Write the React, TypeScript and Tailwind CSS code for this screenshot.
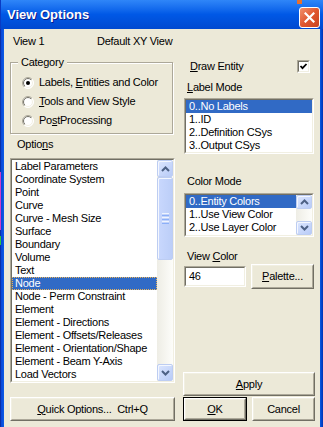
import React from "react";

function U({ children }: { children: React.ReactNode }) {
  return <span className="underline decoration-1 underline-offset-[1px]">{children}</span>;
}

function Sunken({ className = "", children }: { className?: string; children?: React.ReactNode }) {
  return (
    <div className={`border border-t-[#ACA899] border-l-[#ACA899] border-r-white border-b-white ${className}`}>
      <div className="h-full w-full border border-t-[#716F64] border-l-[#716F64] border-r-[#F1EFE2] border-b-[#F1EFE2] bg-white overflow-hidden">
        {children}
      </div>
    </div>
  );
}

function Btn({ className = "", children, def = false }: { className?: string; children: React.ReactNode; def?: boolean }) {
  const core = (
    <div className="h-full w-full border border-t-white border-l-white border-r-[#716F64] border-b-[#716F64]">
      <div className="h-full w-full border border-t-[#F1EFE2] border-l-[#F1EFE2] border-r-[#ACA899] border-b-[#ACA899] flex items-center justify-center bg-[#ECE9D8] leading-[13px]">
        {children}
      </div>
    </div>
  );
  return def ? <div className={`border border-black ${className}`}>{core}</div> : <div className={className}>{core}</div>;
}

function Radio({ checked = false }: { checked?: boolean }) {
  return (
    <svg width="12" height="12" viewBox="0 0 12 12" className="shrink-0">
      <defs>
        <linearGradient id="ro" x1="0" y1="0" x2="1" y2="1">
          <stop offset="0.5" stopColor="#ACA899" />
          <stop offset="0.5" stopColor="#FFFFFF" />
        </linearGradient>
        <linearGradient id="ri" x1="0" y1="0" x2="1" y2="1">
          <stop offset="0.5" stopColor="#716F64" />
          <stop offset="0.5" stopColor="#F1EFE2" />
        </linearGradient>
      </defs>
      <circle cx="6" cy="6" r="5.5" fill="#fff" stroke="url(#ro)" strokeWidth="1" />
      <circle cx="6" cy="6" r="4.5" fill="#fff" stroke="url(#ri)" strokeWidth="1" />
      {checked && <circle cx="6" cy="6" r="2" fill="#000" />}
    </svg>
  );
}

function Check() {
  return (
    <Sunken className="w-[13px] h-[13px]">
      <svg width="9" height="9" viewBox="0 0 9 9">
        <polyline points="1.5,4 3.5,6.2 7.5,2" fill="none" stroke="#000" strokeWidth="1.8" />
      </svg>
    </Sunken>
  );
}

function Chev({ up }: { up: boolean }) {
  return (
    <svg width="9" height="6" viewBox="0 0 9 6">
      <polyline points={up ? "1,5 4.5,1.5 8,5" : "1,1 4.5,4.5 8,1"} fill="none" stroke="#4D6185" strokeWidth="2" />
    </svg>
  );
}

function SBtn({ up, h }: { up: boolean; h: string }) {
  return (
    <div className={`${h} w-full flex items-center justify-center rounded-[2px] border border-[#BDCDF2] bg-gradient-to-br from-[#DCE6FE] to-[#B8CBF7] shadow-[inset_1px_1px_0_#F4F7FE]`}>
      <Chev up={up} />
    </div>
  );
}

function Thumb({ h }: { h: string }) {
  return (
    <div className={`${h} w-full flex flex-col items-center justify-center gap-[1px] rounded-[2px] border border-[#BDCDF2] bg-gradient-to-r from-[#C9D8FD] to-[#BCCEF8] shadow-[inset_1px_1px_0_#F4F7FE]`}>
      <div className="h-[1px] w-[7px] bg-[#EEF4FE]" />
      <div className="h-[1px] w-[7px] bg-[#8CB0F8]" />
      <div className="h-[1px] w-[7px] bg-[#EEF4FE]" />
      <div className="h-[1px] w-[7px] bg-[#8CB0F8]" />
      <div className="h-[1px] w-[7px] bg-[#EEF4FE]" />
      <div className="h-[1px] w-[7px] bg-[#8CB0F8]" />
    </div>
  );
}

function Row({ text, sel = false, focus = false }: { text: string; sel?: boolean; focus?: boolean }) {
  return (
    <div
      className={`h-[13px] leading-[13px] pl-[3px] whitespace-nowrap ${sel ? "bg-[#316AC5] text-white" : ""} ${
        focus ? "outline outline-1 outline-dotted outline-[#E8B35A] -outline-offset-1" : ""
      }`}
    >
      {text}
    </div>
  );
}

const options = [
  "Label Parameters",
  "Coordinate System",
  "Point",
  "Curve",
  "Curve - Mesh Size",
  "Surface",
  "Boundary",
  "Volume",
  "Text",
  "Node",
  "Node - Perm Constraint",
  "Element",
  "Element - Directions",
  "Element - Offsets/Releases",
  "Element - Orientation/Shape",
  "Element - Beam Y-Axis",
  "Load Vectors",
];

export default function App() {
  return (
    <div className="relative w-[323px] h-[427px] overflow-hidden flex flex-col font-['Liberation_Sans',Arial,sans-serif] text-[11px] text-black tracking-[-0.25px]">
      {/* Title bar */}
      <div className="h-[29px] shrink-0 flex items-center justify-between bg-gradient-to-b from-[#2F86F8] via-[#0058E6] to-[#0049D0] shadow-[inset_1px_0_0_#0A3BC4]">
        <div className="pl-[7px] pt-[1px] text-white font-bold text-[13px] tracking-normal [text-shadow:1px_1px_0_#0A1C8C]">
          View Options
        </div>
        <div className="mr-[3px] mt-[6px] w-[21px] h-[21px] rounded-[3px] border border-white bg-gradient-to-br from-[#F0906C] via-[#E0562E] to-[#C8431F] flex items-center justify-center">
          <svg width="11" height="11" viewBox="0 0 11 11">
            <path d="M1.5 1.5 L9.5 9.5 M9.5 1.5 L1.5 9.5" stroke="#fff" strokeWidth="2.2" strokeLinecap="square" />
          </svg>
        </div>
      </div>
      <div className="absolute left-[297px] top-0 w-[5px] h-[4px] bg-[#E8702E]" />

      <div className="flex flex-1">
        {/* left frame */}
        <div className="w-[4px] flex">
          <div className="w-[1px] flex flex-col">
            <div className="h-[143px] bg-[#0A2FA8]" />
            <div className="h-[58px] bg-[#D03CC8]" />
            <div className="h-[6px] bg-[#0A2FA8]" />
            <div className="h-[9px] bg-[#2FC83A]" />
            <div className="flex-1 bg-[#0A2FA8]" />
          </div>
          <div className="flex-1 bg-gradient-to-r from-[#0A45D6] to-[#0C5CE6]" />
        </div>

        {/* body */}
        <div className="flex-1 bg-[#ECE9D8] flex flex-col">
          <div className="mt-[6px] h-[13px] leading-[13px] flex pl-[9px]">
            <span className="w-[84px]">View 1</span>
            <span>Default XY View</span>
          </div>

          <div className="flex pl-[6px]">
            {/* left column */}
            <div className="w-[165px] flex flex-col">
              <div className="relative mt-[14px] mr-[2px] h-[72px] border border-[#ACA899] shadow-[inset_1px_1px_0_#fff,1px_1px_0_#fff]">
                <div className="absolute left-[7px] top-[-7px] px-[3px] h-[13px] leading-[13px] bg-[#ECE9D8]">Category</div>
                <div className="pt-[10px] pl-[11px] flex flex-col">
                  <div className="h-[19px] flex items-center gap-[5px]">
                    <Radio checked />
                    <span className="leading-[13px]">
                      Labels, <U>E</U>ntities and Color
                    </span>
                  </div>
                  <div className="h-[19px] flex items-center gap-[5px]">
                    <Radio />
                    <span className="leading-[13px]">
                      <U>T</U>ools and View Style
                    </span>
                  </div>
                  <div className="h-[19px] flex items-center gap-[5px]">
                    <Radio />
                    <span className="leading-[13px]">
                      Po<U>s</U>tProcessing
                    </span>
                  </div>
                </div>
              </div>

              <div className="mt-[4px] h-[13px] leading-[13px] pl-[7px]">
                Optio<U>n</U>s
              </div>

              <Sunken className="mt-[7px] h-[225px] w-[165px]">
                <div className="flex h-full">
                  <div className="flex-1 flex flex-col pt-[0px]">
                    {options.map((o) => (
                      <Row key={o} text={o} sel={o === "Node"} focus={o === "Node"} />
                    ))}
                  </div>
                  <div className="w-[16px] flex flex-col bg-gradient-to-r from-[#EEEDE5] to-[#FDFDFA]">
                    <SBtn up h="h-[17px]" />
                    <Thumb h="h-[83px]" />
                    <div className="flex-1" />
                    <SBtn up={false} h="h-[17px]" />
                  </div>
                </div>
              </Sunken>

              <Btn className="mt-[14px] h-[24px] w-[165px]">
                <span>
                  <U>Q</U>uick Options...&nbsp;&nbsp;Ctrl+Q
                </span>
              </Btn>
            </div>

            {/* right column */}
            <div className="ml-[8px] w-[132px] flex flex-col">
              <div className="mt-[12px] h-[13px] flex items-center justify-between pl-[7px] pr-[5px]">
                <span className="leading-[13px]">
                  <U>D</U>raw Entity
                </span>
                <Check />
              </div>

              <div className="mt-[8px] h-[13px] leading-[13px] pl-[4px]">
                <U>L</U>abel Mode
              </div>

              <Sunken className="mt-[4px] ml-[1px] w-[130px] h-[56px]">
                <Row text="0..No Labels" sel />
                <Row text="1..ID" />
                <Row text="2..Definition CSys" />
                <Row text="3..Output CSys" />
              </Sunken>

              <div className="mt-[21px] h-[13px] leading-[13px] pl-[4px]">Color Mode</div>

              <Sunken className="mt-[5px] ml-[1px] w-[130px] h-[44px]">
                <div className="flex h-full">
                  <div className="flex-1 flex flex-col">
                    <Row text="0..Entity Colors" sel />
                    <Row text="1..Use View Color" />
                    <Row text="2..Use Layer Color" />
                  </div>
                  <div className="w-[16px] flex flex-col bg-gradient-to-r from-[#EEEDE5] to-[#FDFDFA]">
                    <SBtn up h="h-[14px]" />
                    <div className="flex-1" />
                    <SBtn up={false} h="h-[14px]" />
                  </div>
                </div>
              </Sunken>

              <div className="mt-[13px] h-[13px] leading-[13px] pl-[4px]">
                View <U>C</U>olor
              </div>

              <div className="mt-[1px] h-[25px] flex gap-[5px]">
                <Sunken className="ml-[1px] mt-[2px] w-[62px] h-[21px]">
                  <div className="h-full flex items-center pl-[3px] leading-[13px]">46</div>
                </Sunken>
                <Btn className="w-[63px] h-[25px]">
                  <span>
                    <U>P</U>alette...
                  </span>
                </Btn>
              </div>

              <Btn className="mt-[83px] h-[24px] w-[132px]">
                <span>
                  <U>A</U>pply
                </span>
              </Btn>

              <div className="mt-[1px] h-[24px] flex gap-[5px]">
                <Btn def className="w-[64px] h-[24px]">
                  <span>
                    <U>O</U>K
                  </span>
                </Btn>
                <Btn className="w-[63px] h-[24px]">
                  <span>Cancel</span>
                </Btn>
              </div>
            </div>
          </div>
        </div>

        {/* right frame */}
        <div className="w-[3px] bg-gradient-to-r from-[#0C5AE4] to-[#0032B4]" />
      </div>
    </div>
  );
}
